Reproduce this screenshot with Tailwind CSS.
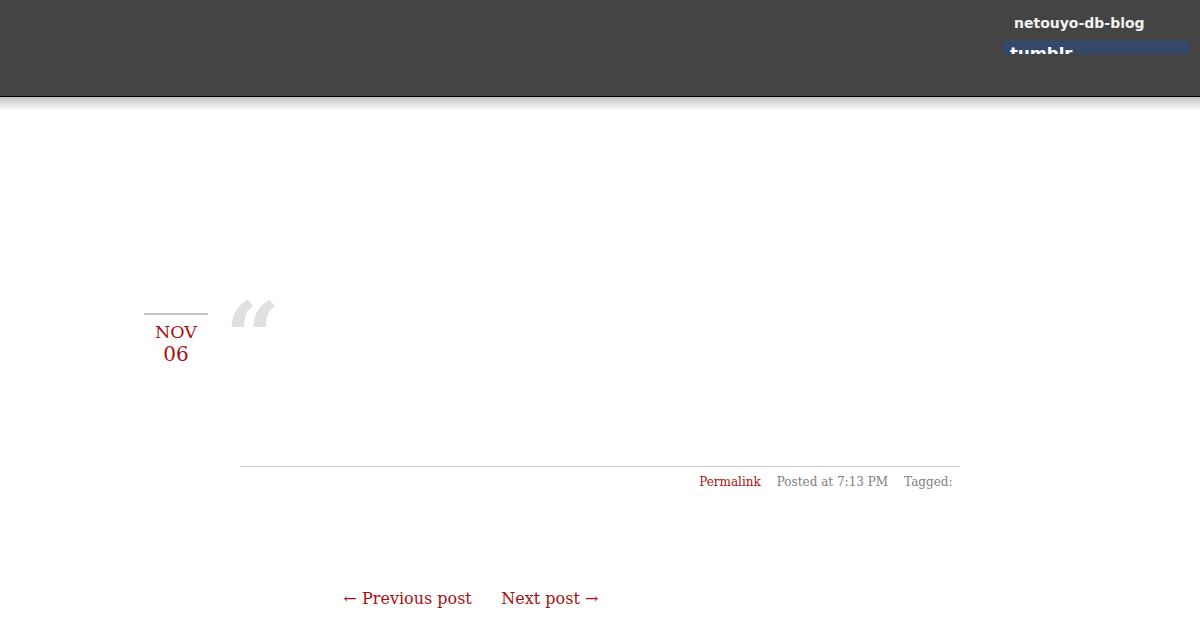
<!DOCTYPE html>
<html><head><meta charset="utf-8"><script src="https://cdn.jsdelivr.net/npm/@tailwindcss/browser@4"></script></head>
<body class="bg-white overflow-hidden font-['DejaVu_Serif',serif] h-[630px]">
<header class="h-[97px] bg-[#444444] border-b border-black flex justify-end pr-[11px]">
  <div class="w-[186px] pt-[14px]">
    <div class="pl-[11px] h-[26px] text-[14px] leading-[18px] font-bold text-[#f2f2f2] font-['DejaVu_Sans',sans-serif]">netouyo-db-blog</div>
    <div class="h-[14px] overflow-hidden bg-[#34496a] pl-[7px] text-[16.5px] leading-[28px] font-bold text-white font-['DejaVu_Sans',sans-serif]">tumblr</div>
  </div>
</header>
<div class="h-[14px] bg-gradient-to-b from-[#c4c4c4] to-white"></div>
<main class="w-[816px] ml-[144px]">
  <div class="flex h-[355px] pt-[180px] gap-[17px]">
    <div class="w-[64px] h-fit mt-[22px] border-t-2 border-[#c4c4c4] text-center text-[#a80f0f] pt-[7px]">
      <div class="text-[17.5px] leading-[20px]">NOV</div>
      <div class="text-[20px] leading-[24px]">06</div>
    </div>
    <div class="text-[#e0e0e0] text-[96px] leading-[96px] font-bold h-[96px] -mt-px">“</div>
  </div>
  <div class="ml-[96px] border-t border-[#cccccc] flex justify-end gap-4 pr-[7.5px] pt-[7px] text-[12px] leading-[17px] text-[#808080]">
    <a class="text-[#a80f0f]">Permalink</a>
    <span>Posted at 7:13 PM</span>
    <span>Tagged:</span>
  </div>
  <nav class="mt-[97px] ml-[199.5px] flex gap-[29.5px] text-[16px] leading-[22px] text-[#a80f0f]">
    <a>← Previous post</a>
    <a>Next post →</a>
  </nav>
</main>
</body></html>
